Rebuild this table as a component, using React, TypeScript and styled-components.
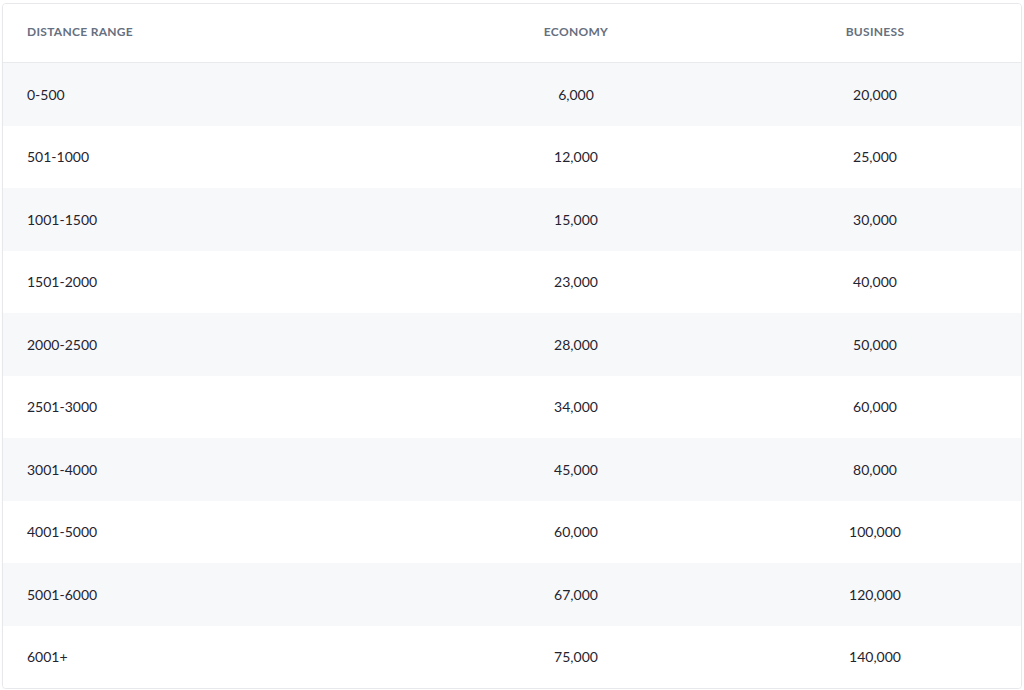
import styled, { createGlobalStyle } from 'styled-components'

const GlobalStyle = createGlobalStyle`
  html, body {
    margin: 0;
    padding: 0;
    background: #ffffff;
  }
  body {
    font-family: Lato, 'Open Sans', sans-serif;
  }
`

const rows = [
  ['0-500', '6,000', '20,000'],
  ['501-1000', '12,000', '25,000'],
  ['1001-1500', '15,000', '30,000'],
  ['1501-2000', '23,000', '40,000'],
  ['2000-2500', '28,000', '50,000'],
  ['2501-3000', '34,000', '60,000'],
  ['3001-4000', '45,000', '80,000'],
  ['4001-5000', '60,000', '100,000'],
  ['5001-6000', '67,000', '120,000'],
  ['6001+', '75,000', '140,000'],
]

export default function App() {
  return (
    <>
      <GlobalStyle />
      <Page>
        <Card>
          <HeadRow>
            <HeadCell>Distance Range</HeadCell>
            <HeadCell $center>Economy</HeadCell>
            <HeadCell $center>Business</HeadCell>
          </HeadRow>
          {rows.map((r, i) => (
            <Row key={r[0]} $striped={i % 2 === 0}>
              <Cell>{r[0]}</Cell>
              <Cell $center>{r[1]}</Cell>
              <Cell $center>{r[2]}</Cell>
            </Row>
          ))}
        </Card>
      </Page>
    </>
  )
}

const Page = styled.div`
  padding: 3px 2px 0 2px;
`

const Card = styled.div`
  border: 1px solid #e6e8eb;
  border-radius: 4px;
  overflow: hidden;
  box-shadow: 0 1px 2px rgba(20, 30, 50, 0.04);
`

const grid = `
  display: grid;
  grid-template-columns: 420px 306px 1fr;
  align-items: center;
`

const HeadRow = styled.div`
  ${grid}
  height: 59px;
  padding-bottom: 3px;
  box-sizing: border-box;
  border-bottom: 1px solid #e8eaee;
  background: #ffffff;
`

const HeadCell = styled.div<{ $center?: boolean }>`
  padding: 0 24px;
  text-align: ${p => (p.$center ? 'center' : 'left')};
  font-size: 12px;
  font-weight: 700;
  letter-spacing: 0.3px;
  text-transform: uppercase;
  color: #667080;
`

const Row = styled.div<{ $striped: boolean }>`
  ${grid}
  height: 62.5px;
  background: ${p => (p.$striped ? '#f7f8fa' : '#ffffff')};
`

const Cell = styled.div<{ $center?: boolean }>`
  padding: 0 24px;
  text-align: ${p => (p.$center ? 'center' : 'left')};
  font-size: 14px;
  color: #1f2430;
`
